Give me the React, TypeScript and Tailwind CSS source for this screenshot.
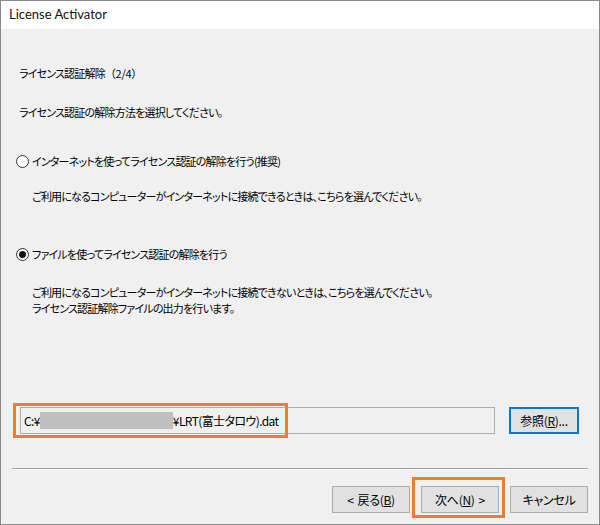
import React from "react";

const jp = "font-['Noto_Sans_CJK_JP','Noto_Sans',sans-serif] [font-feature-settings:'palt']";

const Radio = ({ checked }: { checked?: boolean }) => (
  <span className="w-[13px] h-[13px] rounded-full border border-[#333] bg-white flex items-center justify-center shrink-0">
    {checked && <span className="w-[7px] h-[7px] rounded-full bg-[#111]" />}
  </span>
);

const Btn = ({
  children,
  w = "w-[78px]",
  className = "border border-[#adadad]",
}: {
  children: React.ReactNode;
  w?: string;
  className?: string;
}) => (
  <div
    className={`h-[27px] ${w} bg-[#e1e1e1] flex items-center justify-center text-[12px] tracking-[-0.3px] text-[#000] ${className}`}
  >
    {children}
  </div>
);

export default function App() {
  return (
    <div className={"w-[600px] h-[525px] border border-[#8a8a8a] bg-[#f0f0f0] flex flex-col text-[#000] " + jp}>
      <div className="h-[28px] bg-white flex items-center pl-[8px] text-[13px] font-['Lato','Noto_Sans',sans-serif] text-[#111]">
        License Activator
      </div>

      <div className="flex-1 flex flex-col text-[11px] leading-[16px] tracking-[-0.8px]">
        <div className="mt-[36px] pl-[18px]">
          ライセンス認証解除
          <span className="[font-feature-settings:normal] tracking-[-0.3px]">（2/4）</span>
        </div>
        <div className="mt-[23px] pl-[18px]">ライセンス認証の解除方法を選択してください。</div>

        <div className="mt-[33px] pl-[15px] flex items-center gap-[3px]">
          <Radio />
          <span>インターネットを使ってライセンス認証の解除を行う(推奨)</span>
        </div>
        <div className="mt-[19px] pl-[31px]">
          ご利用になるコンピューターがインターネットに接続できるときは、こちらを選んでください。
        </div>

        <div className="mt-[42px] pl-[15px] flex items-center gap-[3px]">
          <Radio checked />
          <span>ファイルを使ってライセンス認証の解除を行う</span>
        </div>
        <div className="mt-[22px] pl-[31px]">
          <div>ご利用になるコンピューターがインターネットに接続できないときは、こちらを選んでください。</div>
          <div>ライセンス認証解除ファイルの出力を行います。</div>
        </div>

        <div className="mt-[91px] pl-[19px] pr-[20px] flex items-center">
          <div className="relative w-[475px] h-[27px] border border-[#adadad] bg-[#f0f0f0] flex items-center pl-[3px] text-[12px] tracking-[-0.6px]">
            <span>C:¥</span>
            <span className="w-[133px] h-[17px] bg-[#c0c0c0]" />
            <span>¥LRT(富士タロウ).dat</span>
            <div className="absolute left-[-8px] top-[-5px] w-[275px] h-[35px] border-[3px] border-[#ed7d31]" />
          </div>
          <div className="ml-auto">
            <Btn w="w-[70px]" className="border-[2px] border-[#0078d7]">
              参照(<span className="underline">R</span>)...
            </Btn>
          </div>
        </div>

        <div className="mt-[34px] mx-[11px] border-t border-[#a0a0a0] border-b border-b-white" />

        <div className="mt-[16px] pr-[11px] flex justify-end gap-[11px]">
          <Btn>
            <span className="mr-[4px]">&lt;</span>戻る(<span className="underline">B</span>)
          </Btn>
          <div className="relative">
            <Btn>
              次へ(<span className="underline">N</span>)<span className="ml-[4px]">&gt;</span>
            </Btn>
            <div className="absolute left-[-9px] top-[-9px] w-[93px] h-[41px] border-[3px] border-[#ed7d31]" />
          </div>
          <Btn>キャンセル</Btn>
        </div>
      </div>
    </div>
  );
}
